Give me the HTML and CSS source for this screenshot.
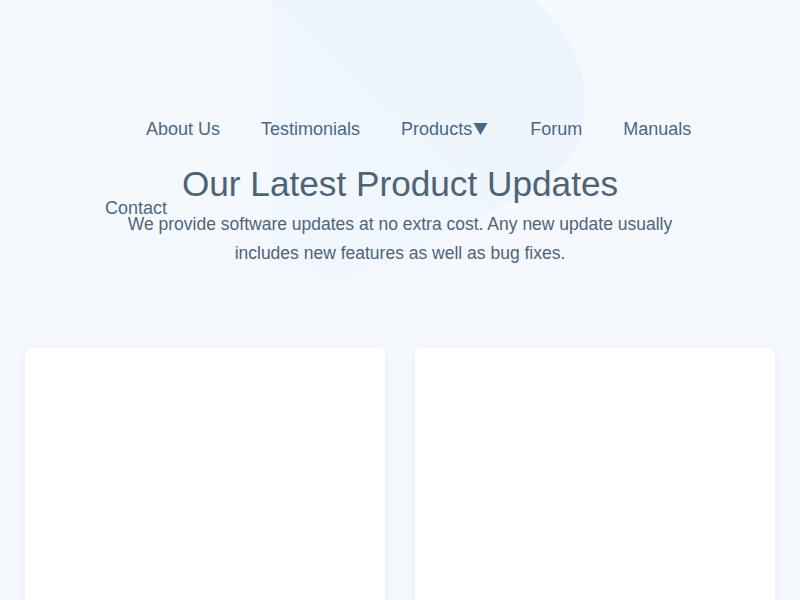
FILE: index.html
```
<!DOCTYPE html>
<html lang="en">
<head>
<meta charset="utf-8">
<title>Our Latest Product Updates</title>
<link rel="stylesheet" href="styles.css">
</head>
<body>
<svg class="blob" width="800" height="320" viewBox="0 0 800 320" aria-hidden="true">
  <defs>
    <linearGradient id="bg" x1="0" y1="1" x2="1" y2="0">
      <stop offset="0" stop-color="#f3f8fd"/>
      <stop offset="1" stop-color="#ebf3fd"/>
    </linearGradient>
  </defs>
  <path d="M270,0 H533 C568,30 588,70 585,112 C582,150 565,165 535,190 L370,270 C335,288 305,296 288,291 C274,287 270,275 270,260 Z" fill="url(#bg)"/>
</svg>
<header class="hero">
  <nav class="nav">
    <ul class="nav-list">
      <li class="nav-item">About Us</li>
      <li class="nav-item">Testimonials</li>
      <li class="nav-item">Products<svg class="caret" width="17" height="12" viewBox="0 0 17 12" aria-hidden="true"><path d="M1.5,0 H15.5 L8.5,12 Z" fill="#476886"/></svg></li>
      <li class="nav-item">Forum</li>
      <li class="nav-item">Manuals</li>
      <li class="nav-item">Contact</li>
    </ul>
  </nav>
  <h1 class="title">Our Latest Product Updates</h1>
  <p class="lead">We provide software updates at no extra cost. Any new update usually includes new features as well as bug fixes.</p>
</header>
<section class="cards">
  <div class="card"></div>
  <div class="card"></div>
</section>
</body>
</html>
```
FILE: styles.css
```
html, body {
  margin: 0;
  padding: 0;
}
body {
  background: #f5f9fd;
  font-family: "Liberation Sans", Arial, sans-serif;
  color: #4b6580;
  position: relative;
  min-height: 600px;
  overflow: hidden;
}
.blob {
  position: absolute;
  top: 0;
  left: 0;
  z-index: 0;
}
.hero {
  position: relative;
  z-index: 1;
  padding-top: 90px;
}
.nav {
  height: 74px;
  margin-left: 105px;
  width: 655px;
}
.nav-list {
  list-style: none;
  margin: 0;
  padding: 0;
  display: flex;
  flex-wrap: wrap;
  column-gap: 41px;
  row-gap: 0;
}
.nav-list::before {
  content: "";
  width: 0;
}
.nav-item {
  font-size: 18px;
  line-height: 21px;
  padding: 29px 0;
  color: #4a6886;
}
.caret {
  vertical-align: baseline;
}
.title {
  margin: 0 0 6px;
  font-size: 35.2px;
  line-height: 40px;
  font-weight: 400;
  text-align: center;
  color: #4d6378;
}
.lead {
  margin: 0 auto;
  max-width: 580px;
  font-size: 17.5px;
  line-height: 29px;
  text-align: center;
  color: #4f6478;
}
.cards {
  position: relative;
  z-index: 1;
  display: grid;
  grid-template-columns: 1fr 1fr;
  gap: 30px;
  padding: 0 25px;
  margin-top: 80px;
}
.card {
  background: #ffffff;
  border-radius: 6px;
  height: 400px;
  box-shadow: 0 2px 8px rgba(60, 90, 130, 0.07);
}
```
